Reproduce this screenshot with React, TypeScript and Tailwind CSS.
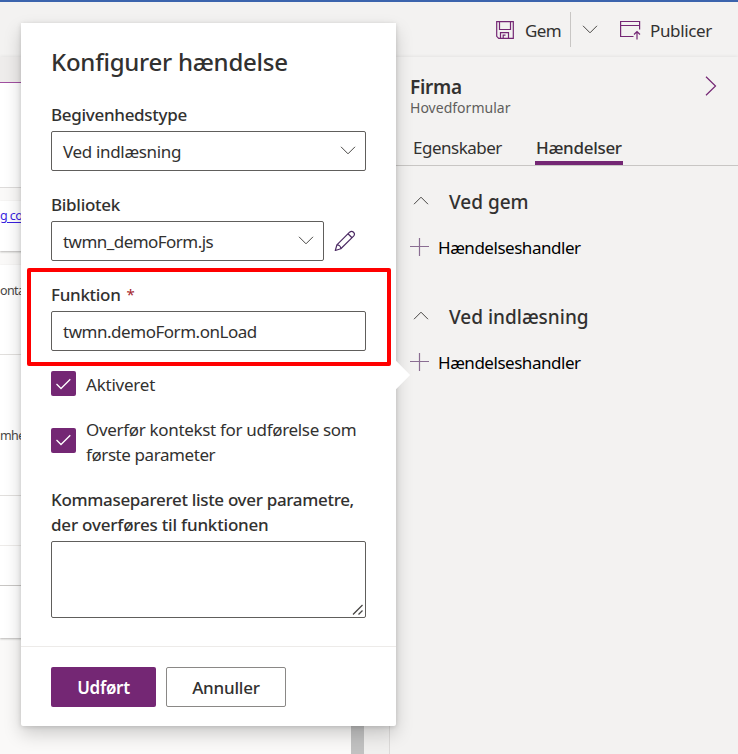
import React from "react";

function Chevron({ className = "", dir = "down" }: { className?: string; dir?: "down" | "up" }) {
  return (
    <svg className={className} width="16" height="9" viewBox="0 0 16 9" fill="none" stroke="#484644" strokeWidth="1">
      <path d={dir === "down" ? "M1 .8 8 7.8 15 .8" : "M1 8.2 8 1.2 15 8.2"} />
    </svg>
  );
}

function SaveIcon() {
  return (
    <svg width="18" height="18" viewBox="0 0 18 18" fill="none" stroke="#742774" strokeWidth="1.2">
      <path d="M.7 .7H17.3V17.3H2.7L.7 15.3Z" />
      <path d="M3.5 .7V8.5H14.5V.7" />
      <path d="M4.5 17.3V11.7H12.5V17.3M7.2 17V14.2H9.5" />
    </svg>
  );
}

function PublishIcon() {
  return (
    <svg width="21" height="20" viewBox="0 0 21 20" fill="none" stroke="#742774" strokeWidth="1.2">
      <path d="M13.5 16.5H.6V1.5H19.6V9.5M.6 5.5H19.6" />
      <path d="M17 19.5V11.5M14 14.5 17 11.5 20 14.5" />
    </svg>
  );
}

function PencilIcon() {
  return (
    <svg width="22" height="22" viewBox="0 0 22 22" fill="none" stroke="#4b2a63" strokeWidth="1.2" strokeLinejoin="round">
      <path d="M1.3 20.5 2.9 14.9 15.6 2.2C18.3-.2 22 3.3 19.6 6.1L6.8 18.8Z" />
      <path d="M14 3.8 18 7.7M2.9 14.9C5 14.9 6.8 16.6 6.8 18.8" />
    </svg>
  );
}

function Checkbox({ className = "" }: { className?: string }) {
  return (
    <span className={"flex h-[25px] w-[25px] shrink-0 items-center justify-center rounded-[2px] bg-[#742774] " + className}>
      <svg width="15" height="12" viewBox="0 0 15 12" fill="none" stroke="white" strokeWidth="1.3">
        <path d="M.5 6 5 10.5 14.3 1.2" />
      </svg>
    </span>
  );
}

function Toolbar() {
  return (
    <header className="flex h-[55px] items-center bg-[#f3f2f1] pl-[496px] text-[17px] text-[#323130]">
      <SaveIcon />
      <span className="ml-[11px] w-[45px] whitespace-nowrap pt-[3px] tracking-[-0.6px]">Gem</span>
      <span className="h-[35px] w-px bg-[#c8c6c4]" />
      <Chevron className="ml-[11px]" />
      <span className="ml-[22px]"><PublishIcon /></span>
      <span className="ml-[9px] whitespace-nowrap pt-[3px] tracking-[-0.35px]">Publicer</span>
    </header>
  );
}

function Canvas() {
  return (
    <main className="flex w-[390px] shrink-0 flex-col bg-[#faf9f8] text-[12.5px] font-normal text-[#484644]">
      <div className="h-[25px] bg-[#eeeceb]" />
      <div className="h-[106px] border-t border-b border-t-[#a04fa0] border-b-[#dddbda] bg-white" />
      <div className="mt-[13px] h-[50px] bg-white pt-[6px] shadow-[0_1px_2px_#b8b6b4]">
        <a className="tracking-[-0.6px] text-[#3a1fe0] underline underline-offset-2">g co</a>
      </div>
      <div className="mt-[14px] h-[373px] bg-white shadow-[0_1px_2px_#b8b6b4]">
        <div className="h-[90px] border-b border-[#e1dfdd] pt-[17px] tracking-[-0.6px]">onta</div>
        <div className="h-[141px] border-b border-[#e1dfdd] pt-[72px] tracking-[-0.6px]">mhe</div>
        <div className="h-[50px] border-b border-[#edebe9]" />
        <div className="h-[40px] border-b border-[#c8c6c4]" />
      </div>
      <div className="flex flex-1 justify-end">
        <div className="w-[13px] bg-[#c1c1c1]" />
        <div className="w-[26px] border-r border-[#dcdad9] bg-[#f0efee]" />
      </div>
    </main>
  );
}

function HandlerSection({ title }: { title: string }) {
  return (
    <section className="h-[115px]">
      <h3 className="flex h-[30px] items-center pl-[23px] text-[19px] font-[550] text-[#323130]">
        <Chevron dir="up" className="mb-1" />
        <span className="ml-[20px] whitespace-nowrap">{title}</span>
      </h3>
      <button className="mt-[15px] flex h-[30px] items-center pl-[20px] text-[17px] text-black">
        <svg width="19" height="18" viewBox="0 0 19 18" stroke="#8a6d92" strokeWidth="1.2">
          <path d="M9.5 0V18M0 8.5H19" />
        </svg>
        <span className="ml-[9px] whitespace-nowrap pt-px tracking-[-0.47px]">Hændelseshandler</span>
      </button>
    </section>
  );
}

function PropertyPanel() {
  return (
    <aside className="flex-1 bg-[#f3f2f1] text-[#323130]">
      <div className="flex h-[65px] pl-[20px] pt-[16px]">
        <div className="w-[295px]">
          <h2 className="text-[19px] font-[600] leading-[28px] tracking-[-0.3px]">Firma</h2>
          <p className="text-[14px] leading-[14px] tracking-[0.02px] text-[#605e5c]">Hovedformular</p>
        </div>
        <svg className="mt-[3px]" width="12" height="20" viewBox="0 0 12 20" fill="none" stroke="#742774" strokeWidth="1.2">
          <path d="M1 .7 10.5 10 1 19.3" />
        </svg>
      </div>
      <nav className="flex h-[44px] border-b border-[#c8c6c4] pl-[23px] text-[17px] leading-[51px]">
        <span className="w-[122px] whitespace-nowrap tracking-[-0.5px]">Egenskaber</span>
        <span className="h-[43px] w-[88px] whitespace-nowrap border-b-4 border-[#742774] pl-px font-[550] tracking-[-0.3px]">Hændelser</span>
      </nav>
      <div className="pt-[21px]">
        <HandlerSection title="Ved gem" />
        <HandlerSection title="Ved indlæsning" />
      </div>
    </aside>
  );
}

const box = "flex h-10 items-center border border-[#605e5c] rounded-[2px] bg-white pl-[11px] text-[17px] whitespace-nowrap";
const label = "flex h-[26px] items-center pt-px text-[17px] font-[550] whitespace-nowrap tracking-[-0.3px]";

function Dialog() {
  return (
    <div role="dialog" className="absolute left-[21px] top-[23px] h-[703px] w-[375px] rounded-[2px] bg-white text-[#323130] shadow-[0_8px_18px_rgba(0,0,0,0.18),0_1px_5px_rgba(0,0,0,0.14)]">
      <span className="absolute -right-[10px] top-[342px] h-5 w-5 rotate-45 bg-white" />
      <div className="relative h-[624px] border-b border-[#edebe9] bg-white px-[30px] pt-[22px]">
        <h1 className="h-[34px] whitespace-nowrap text-[24px] font-[550] leading-[34px] tracking-[-0.25px]">Konfigurer hændelse</h1>
        <div className="pt-[22px]">
          <div className={label}>Begivenhedstype</div>
          <div className={box + " mt-[4px] justify-between pr-[9px]"}>
            <span className="pt-px tracking-[-0.33px]">Ved indlæsning</span>
            <Chevron className="mb-[2px]" />
          </div>
        </div>
        <div className="pt-[20px]">
          <div className={label}>Bibliotek</div>
          <div className="mt-[4px] flex items-center">
            <div className={box + " w-[273px] justify-between pr-[9px]"}>
              <span className="pt-px tracking-[-0.54px]">twmn_demoForm.js</span>
              <Chevron className="mb-[2px]" />
            </div>
            <span className="ml-[10px]"><PencilIcon /></span>
          </div>
        </div>
        <div className="pt-[20px]">
          <div className={label}>Funktion<span className="ml-[6px] text-[15px] font-normal text-[#a4262c]">*</span></div>
          <div className={box + " mt-[4px]"}><span className="pt-px tracking-[-0.47px]">twmn.demoForm.onLoad</span></div>
        </div>
        <div className="mt-5 flex h-[25px] items-center gap-[10px] text-[17px] tracking-[-0.22px]">
          <Checkbox /><span className="pt-[2px]">Aktiveret</span>
        </div>
        <div className="mt-[21px] flex h-[50px] items-center gap-[10px] text-[17px] leading-[25px]">
          <Checkbox className="mb-1" />
          <span className="whitespace-nowrap">
            <span className="tracking-[-0.32px]">Overfør kontekst for udførelse som</span><br />
            <span className="tracking-[-0.42px]">første parameter</span>
          </span>
        </div>
        <div className="mt-5 whitespace-nowrap text-[17px] font-[550] leading-[25px]">
          <span className="tracking-[-0.32px]">Kommasepareret liste over parametre,</span><br />
          <span className="tracking-[-0.2px]">der overføres til funktionen</span>
        </div>
        <div className="mt-[4px] flex h-[77px] items-end justify-end rounded-[2px] border border-[#605e5c] p-[1px]">
          <svg width="12" height="12" viewBox="0 0 12 12" stroke="#484644" strokeWidth="1.3">
            <path d="M1 10.5 10.5 1M6.5 10.5 10.5 6.5" />
          </svg>
        </div>
      </div>
      <div className="flex gap-[10px] px-[30px] pt-5 text-[17px] font-semibold">
        <button className="h-10 w-[105px] rounded-[2px] bg-[#742774] pt-px tracking-[-0.3px] text-white">Udført</button>
        <button className="h-10 w-[120px] rounded-[2px] border border-[#8a8886] bg-white pt-px font-[550] tracking-[-0.2px]">Annuller</button>
      </div>
    </div>
  );
}

export default function App() {
  return (
    <div className="relative flex h-[754px] w-[738px] flex-col overflow-hidden bg-[#f3f2f1] font-[380] [font-family:'Noto_Sans','Open_Sans',sans-serif]">
      <div className="h-[2px] shrink-0 bg-[#3b64ad]" />
      <Toolbar />
      <div className="flex min-h-0 flex-1 shadow-[0_-1px_3px_rgba(0,0,0,0.06)]">
        <Canvas />
        <PropertyPanel />
      </div>
      <Dialog />
      <div className="absolute left-[27px] top-[268px] h-[98px] w-[364px] rounded-[2px] border-4 border-[#ff0000]" />
    </div>
  );
}
